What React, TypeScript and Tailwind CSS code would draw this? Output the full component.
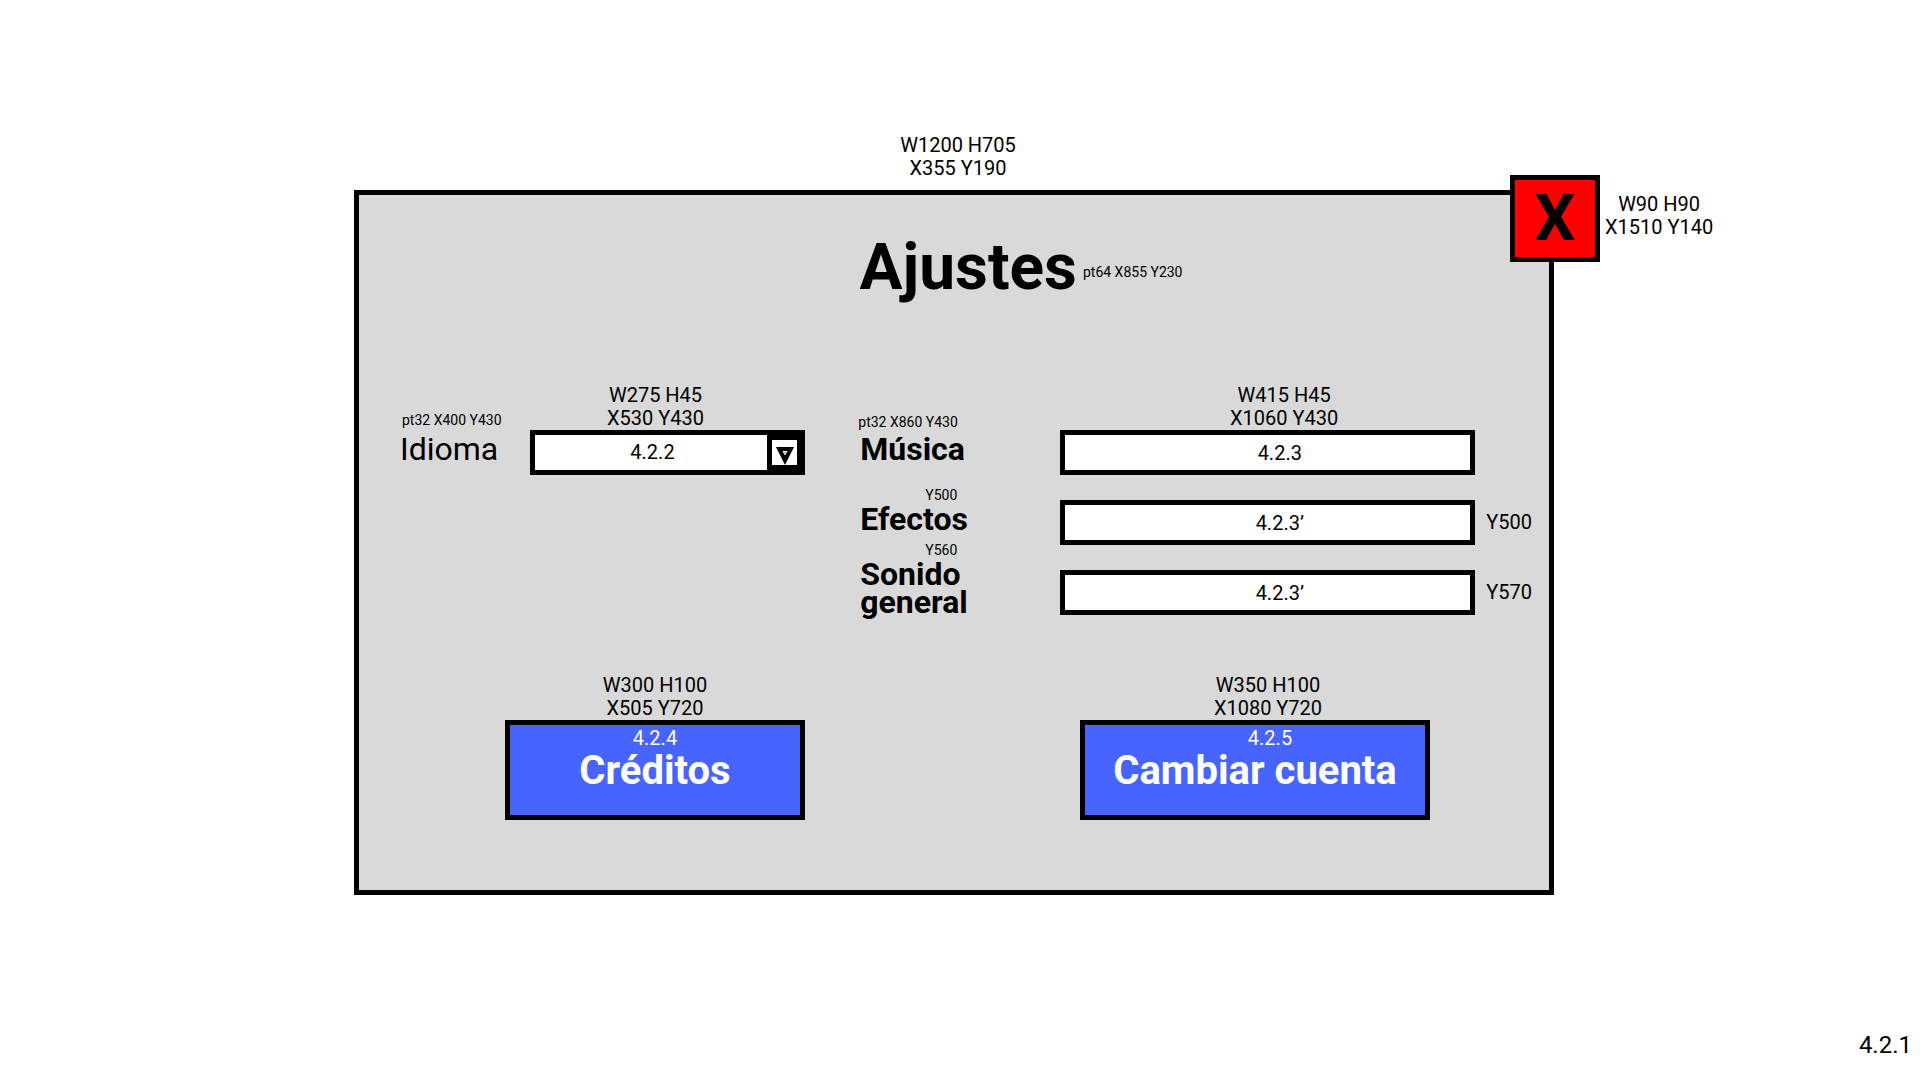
import type { ReactNode } from "react";

function Spec({ lines, className = "" }: { lines: string[]; className?: string }) {
  return (
    <p className={`text-center text-[20px] leading-[23px] whitespace-nowrap ${className}`}>
      {lines.map((line) => (
        <span key={line} className="block">
          {line}
        </span>
      ))}
    </p>
  );
}

function Note({ children, className = "" }: { children: ReactNode; className?: string }) {
  return <p className={`text-[14px] leading-4 whitespace-nowrap ${className}`}>{children}</p>;
}

function VolumeField({ id, value, side }: { id: string; value: string; side?: string }) {
  return (
    <div className="flex items-center gap-[11px]">
      <input
        id={id}
        type="text"
        defaultValue={value}
        className="h-[45px] w-[415px] border-5 border-black bg-white pl-6 text-center text-[20px] leading-[23px]"
      />
      {side && <span className="text-[20px] leading-[23px]">{side}</span>}
    </div>
  );
}

function ActionButton({
  code,
  label,
  className,
  codeClassName = "",
}: {
  code: string;
  label: string;
  className: string;
  codeClassName?: string;
}) {
  return (
    <button
      type="button"
      className={`flex h-[100px] flex-col items-center border-5 border-black bg-[#4764ff] pt-px text-white ${className}`}
    >
      <span className={`text-[20px] leading-6 ${codeClassName}`}>{code}</span>
      <span className="text-[40px] leading-[42px] font-bold whitespace-nowrap">{label}</span>
    </button>
  );
}

export default function App() {
  return (
    <div className="flex min-h-screen flex-col bg-white font-['Roboto',sans-serif] text-black">
      <main className="mx-auto w-full max-w-[1212px] pt-[134px] pr-3">
        <Spec lines={["W1200 H705", "X355 Y190"]} className="pl-2" />

        <section className="relative mt-[10px] border-5 border-black bg-[#d9d9d9] pt-[35px] pb-[70px]">
          <div className="absolute -top-5 left-full -ml-[39px] flex items-start gap-[5px]">
            <button
              type="button"
              aria-label="Cerrar"
              className="flex h-[87px] w-[90px] items-center justify-center border-5 border-black bg-[#ff0000] text-[64px] leading-none font-bold"
            >
              X
            </button>
            <Spec lines={["W90 H90", "X1510 Y140"]} className="pt-[18px]" />
          </div>

          <header className="flex items-start justify-center gap-[6px] pl-[134px]">
            <h1 className="text-[64px] leading-[75px] font-bold">Ajustes</h1>
            <Note className="pt-[34px]">pt64 X855 Y230</Note>
          </header>

          <div className="mt-[79px] flex justify-between pr-[17px] pl-[41px]">
            <div className="flex">
              <div className="w-[130px] pt-7">
                <Note className="pl-[2px]">pt32 X400 Y430</Note>
                <label htmlFor="idioma" className="mt-[7px] block text-[32px] leading-7">
                  Idioma
                </label>
              </div>
              <div>
                <Spec lines={["W275 H45", "X530 Y430"]} className="pr-6" />
                <div className="relative">
                  <select
                    id="idioma"
                    className="block h-[45px] w-[275px] appearance-none border-5 border-black bg-white pr-[30px] text-center text-[20px] leading-[23px]"
                  >
                    <option>4.2.2</option>
                  </select>
                  <span className="pointer-events-none absolute inset-y-0 right-0 flex w-[38px] items-center bg-black pl-[5px]">
                    <svg viewBox="0 0 25 25" className="size-[25px] bg-white" aria-hidden="true">
                      <path d="M4 7H22L13 25Z" fill="#000" />
                      <path d="M10.5 11H15.5L13.5 15H12.5Z" fill="#fff" />
                      <path d="M12.5 12H13.5V14H12.5Z" fill="#777" />
                    </svg>
                  </span>
                </div>
              </div>
            </div>

            <div className="flex">
              <div className="flex w-[202px] flex-col pt-[30px]">
                <Note>pt32 X860 Y430</Note>
                <label htmlFor="musica" className="mt-[5px] pl-[2px] text-[32px] leading-7 font-bold">
                  Música
                </label>
                <Note className="mt-[24px] w-[99px] text-right">Y500</Note>
                <label htmlFor="efectos" className="mt-[2px] pl-[2px] text-[32px] leading-7 font-bold">
                  Efectos
                </label>
                <Note className="mt-[9px] w-[99px] text-right">Y560</Note>
                <label htmlFor="sonido" className="mt-[2px] w-[130px] pl-[2px] text-[32px] leading-7 font-bold">
                  Sonido general
                </label>
              </div>
              <div>
                <Spec lines={["W415 H45", "X1060 Y430"]} className="pr-[24px]" />
                <div className="flex flex-col gap-[25px]">
                  <VolumeField id="musica" value="4.2.3" />
                  <VolumeField id="efectos" value="4.2.3’" side="Y500" />
                  <VolumeField id="sonido" value="4.2.3’" side="Y570" />
                </div>
              </div>
            </div>
          </div>

          <div className="mt-[58px] flex justify-between pr-[119px] pl-[146px]">
            <div>
              <Spec lines={["W300 H100", "X505 Y720"]} />
              <ActionButton code="4.2.4" label="Créditos" className="w-[300px]" />
            </div>
            <div>
              <Spec lines={["W350 H100", "X1080 Y720"]} className="pl-[26px]" />
              <ActionButton code="4.2.5" label="Cambiar cuenta" className="w-[350px]" codeClassName="pl-[30px]" />
            </div>
          </div>
        </section>
      </main>

      <footer className="mt-auto pr-2 pb-[21px] text-right text-[24px] leading-7">4.2.1</footer>
    </div>
  );
}
